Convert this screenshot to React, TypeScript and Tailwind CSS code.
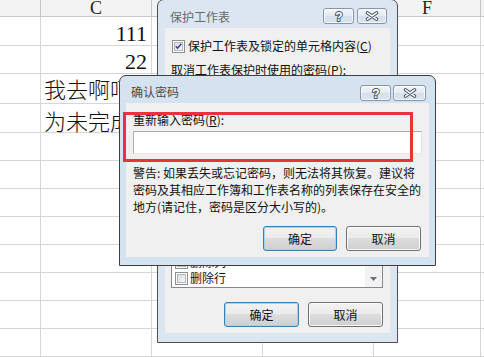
import React from "react";

function CapBtn({ kind, w }: { kind: "help" | "close"; w: string }) {
  return (
    <div
      className={`${w} h-[16px] rounded-[3px] border border-[#8796ab] bg-[linear-gradient(#f3f6fa,#e4eaf2_50%,#d6dfea_50%,#dbe3ee)] shadow-[inset_0_0_0_1px_rgba(255,255,255,0.7)] flex items-center justify-center`}
    >
      {kind === "help" ? (
        <svg width="10" height="13" viewBox="0 0 10 13">
          <text
            x="5"
            y="11"
            textAnchor="middle"
            fontSize="12"
            fontWeight="bold"
            fontFamily="Liberation Sans, sans-serif"
            fill="#ffffff"
            stroke="#46505e"
            strokeWidth="1.8"
            paintOrder="stroke"
          >
            ?
          </text>
        </svg>
      ) : (
        <svg width="14" height="10" viewBox="0 0 14 10">
          <path d="M2.5 1.8 L11.5 8.2 M11.5 1.8 L2.5 8.2" stroke="#46505e" strokeWidth="3.4" strokeLinecap="round" />
          <path d="M2.5 1.8 L11.5 8.2 M11.5 1.8 L2.5 8.2" stroke="#ffffff" strokeWidth="1.5" strokeLinecap="round" />
        </svg>
      )}
    </div>
  );
}

function Btn({ label, primary, w }: { label: string; primary?: boolean; w: string }) {
  return (
    <div
      className={`${w} h-[25px] rounded-[3px] border ${
        primary
          ? "border-[#3c7fb1] shadow-[inset_0_0_0_1px_#9fd6f5]"
          : "border-[#707070] shadow-[inset_0_0_0_1px_#fbfbfb]"
      } bg-[linear-gradient(#f2f2f2,#ebebeb_50%,#dddddd_50%,#cfcfcf)] flex items-center justify-center text-[12px] leading-none text-[#111]`}
    >
      {label}
    </div>
  );
}

function Check({ checked }: { checked?: boolean }) {
  return (
    <div className="w-[13px] h-[13px] shrink-0 border border-[#8e8f8f] bg-white p-[1px]">
      <div className="w-full h-full border border-[#b4b8bd] bg-[linear-gradient(135deg,#dcdde0,#f6f6f6)] flex items-center justify-center">
        {checked && (
          <svg width="9" height="9" viewBox="0 0 9 9">
            <path d="M1 4.2 L3.4 6.8 L8 1" fill="none" stroke="#2f3c8f" strokeWidth="1.8" />
          </svg>
        )}
      </div>
    </div>
  );
}

const headers = ["", "C", "", "", "F", ""];

function Cell({ r, c }: { r: number; c: number }) {
  const header = r === 0;
  const right = c < 5 ? "border-r" : "";
  const base = header
    ? `${right} border-b border-[#c6c6c6] bg-[#f3f3f3]`
    : `${right} border-b border-[#d6d6d6]`;
  let content: React.ReactNode = null;
  if (header && headers[c]) {
    content = (
      <div className="flex justify-center -mt-[1px] text-[18px] leading-none text-[#222] font-['Liberation_Serif',serif]">
        {headers[c]}
      </div>
    );
  } else if (c === 1 && r === 1) {
    content = (
      <div className="flex justify-end pr-[4px] pt-[6px] text-[22px] leading-none text-[#111] font-['Liberation_Serif',serif]">
        111
      </div>
    );
  } else if (c === 1 && r === 2) {
    content = (
      <div className="flex justify-end pr-[4px] pt-[5px] text-[22px] leading-none text-[#111] font-['Liberation_Serif',serif]">
        22
      </div>
    );
  } else if (c === 1 && r === 3) {
    content = (
      <div className="pl-[3px] pt-[3px] whitespace-nowrap text-[22px] leading-none text-[#111] font-light font-['Noto_Sans_CJK_SC',sans-serif]">
        我去啊呵呵
      </div>
    );
  } else if (c === 1 && r === 4) {
    content = (
      <div className="pl-[3px] pt-[5px] whitespace-nowrap text-[22px] leading-none text-[#111] font-light font-['Noto_Sans_CJK_SC',sans-serif]">
        为未完成的
      </div>
    );
  }
  return <div className={`${base} min-w-0 overflow-visible`}>{content}</div>;
}

export default function App() {
  const rows = Array.from({ length: 13 }, (_, i) => i);
  const cols = Array.from({ length: 6 }, (_, i) => i);
  return (
    <div className="relative w-[484px] h-[357px] overflow-hidden bg-white font-['Noto_Sans_CJK_SC','Noto_Sans',sans-serif]">
      <div className="grid grid-cols-[41px_111px_111px_111px_107px_3px] grid-rows-[17px_29px_28px_30px_29px_28px_28px_28px_28px_28px_28px_28px_28px]">
        {rows.map((r) => cols.map((c) => <Cell key={`${r}-${c}`} r={r} c={c} />))}
      </div>

      {/* Back dialog: 保护工作表 */}
      <div className="absolute left-[157px] top-[-1px] w-[241px] h-[344px] rounded-t-[7px] border border-[#505050] bg-[#dce6f1] flex flex-col">
        <div className="h-[28px] shrink-0 flex items-start justify-between pl-[12px] pr-[10px]">
          <span className="mt-[9px] text-[12px] leading-[16px] text-[#6a6a6a]">保护工作表</span>
          <div className="mt-[8px] flex gap-[3px]">
            <CapBtn kind="help" w="w-[31px]" />
            <CapBtn kind="close" w="w-[30px]" />
          </div>
        </div>
        <div className="mx-[7px] mb-[9px] flex-1 min-h-0 bg-[#f0f0f0] flex flex-col pl-[6px] pr-[7px] pt-[10px] pb-[6px] text-[12px] leading-[16px] text-[#111]">
          <div className="h-[16px] flex items-center gap-[3px] ml-[1px]">
            <Check checked />
            <span>
              保护工作表及锁定的单元格内容(<span className="underline">C</span>)
            </span>
          </div>
          <div className="mt-[8px] h-[16px] whitespace-nowrap">
            取消工作表保护时使用的密码(<span className="underline">P</span>):
          </div>
          <div className="mt-[3px] h-[22px] border border-[#abadb3] bg-white" />
          <div className="mt-[8px] h-[16px]" />
          <div className="mt-[3px] flex-1 min-h-0 border border-[#828790] bg-white flex overflow-hidden">
            <div className="flex-1 flex flex-col justify-end pl-[3px] pb-[1px]">
              {["删除列", "删除行"].map((t) => (
                <div key={t} className="h-[16px] shrink-0 flex items-center gap-[2px]">
                  <Check />
                  <span>{t}</span>
                </div>
              ))}
            </div>
            <div className="w-[17px] bg-[#f2f2f2] flex flex-col justify-end items-center">
              <div className="h-[17px] flex items-center justify-center">
                <svg width="7" height="4" viewBox="0 0 7 4">
                  <path d="M0 0 H7 L3.5 4 Z" fill="#6d6d6d" />
                </svg>
              </div>
            </div>
          </div>
          <div className="mt-[14px] flex justify-end gap-[9px]">
            <Btn label="确定" primary w="w-[75px]" />
            <Btn label="取消" w="w-[75px]" />
          </div>
        </div>
      </div>

      {/* Front dialog: 确认密码 */}
      <div className="absolute left-[119px] top-[75px] w-[317px] h-[191px] rounded-t-[7px] border border-[#3f3f3f] bg-[#d5e2f0] flex flex-col">
        <div className="h-[27px] shrink-0 flex items-start justify-between pl-[11px] pr-[9px]">
          <span className="mt-[8px] text-[12px] leading-[16px] text-[#4a4a4a]">确认密码</span>
          <div className="mt-[9px] flex gap-[2px]">
            <CapBtn kind="help" w="w-[31px]" />
            <CapBtn kind="close" w="w-[33px]" />
          </div>
        </div>
        <div className="mx-[6px] mb-[8px] flex-1 min-h-0 bg-[#f0f0f0] flex flex-col pl-[7px] pr-[7px] pt-[9px] pb-[6px] text-[12px] text-[#111]">
          <div className="h-[16px] leading-[16px] whitespace-nowrap">
            重新输入密码(<span className="underline">R</span>):
          </div>
          <div className="mt-[3px] h-[23px] border border-[#abadb3] border-r-[#dbdfe6] border-b-[#e3e9ef] bg-white" />
          <div className="mt-[10px] leading-[17px] whitespace-nowrap">
            <div>警告: 如果丢失或忘记密码，则无法将其恢复。建议将</div>
            <div>密码及其相应工作簿和工作表名称的列表保存在安全的</div>
            <div>地方(请记住，密码是区分大小写的)。</div>
          </div>
          <div className="mt-auto flex justify-end gap-[9px] pr-[1px]">
            <Btn label="确定" primary w="w-[74px]" />
            <Btn label="取消" w="w-[75px]" />
          </div>
        </div>
        <div className="absolute left-[3px] top-[36px] w-[290px] h-[50px] border-[3px] border-[#e8333b]" />
      </div>
    </div>
  );
}
